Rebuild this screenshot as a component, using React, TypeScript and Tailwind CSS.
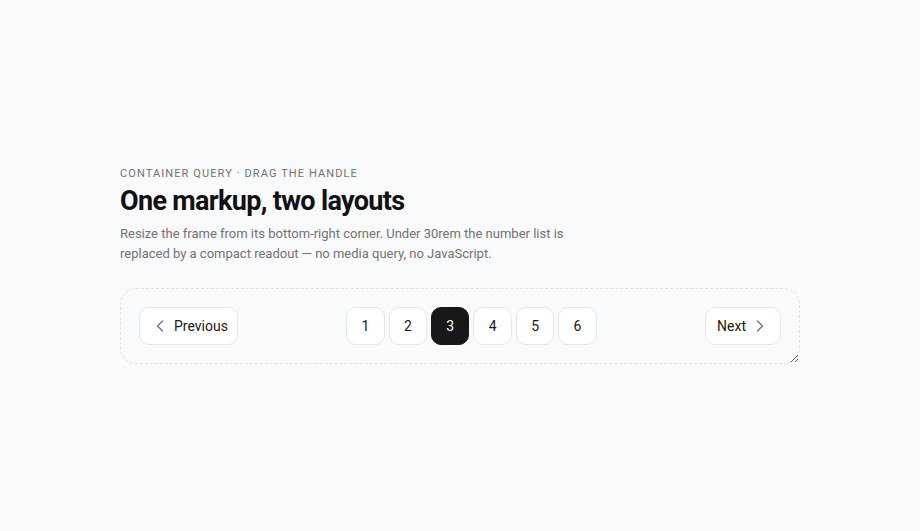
import { ChevronLeft, ChevronRight } from "lucide-react";

const PAGES = [1, 2, 3, 4, 5, 6];
const CURRENT = 3;

const Pager = () => {
  return (
    <nav
      aria-label="Pagination"
      className="@container resize overflow-hidden rounded-2xl border border-dashed border-[#dfe2e7] p-[18px]"
    >
      <div className="flex items-center justify-between">
        <button
          type="button"
          className="flex h-[38px] items-center gap-1 rounded-[10px] border border-[#e6e7ea] bg-white pl-2.5 pr-[9px] text-sm text-[#18181b]"
        >
          <ChevronLeft className="h-5 w-5 text-[#71717a]" strokeWidth={1.5} />
          Previous
        </button>

        <ol className="flex gap-1 @max-[30rem]:hidden">
          {PAGES.map((page) => (
            <li key={page}>
              <button
                type="button"
                aria-current={page === CURRENT ? "page" : undefined}
                className={
                  page === CURRENT
                    ? "flex h-[38px] w-[38.4px] items-center justify-center rounded-[10px] border border-[#18181b] bg-[#18181b] text-sm text-white"
                    : "flex h-[38px] w-[38.4px] items-center justify-center rounded-[10px] border border-[#e6e7ea] bg-white text-sm text-[#18181b]"
                }
              >
                {page}
              </button>
            </li>
          ))}
        </ol>

        <span className="hidden text-sm text-[#52525b] @max-[30rem]:inline">
          Page {CURRENT} of {PAGES.length}
        </span>

        <button
          type="button"
          className="flex h-[38px] items-center gap-1 rounded-[10px] border border-[#e6e7ea] bg-white pl-[11px] pr-2.5 text-sm text-[#18181b]"
        >
          Next
          <ChevronRight className="h-5 w-5 text-[#71717a]" strokeWidth={1.5} />
        </button>
      </div>
    </nav>
  );
};

const App = () => {
  return (
    <div className="flex min-h-screen items-center justify-center bg-[#f9fafb] pb-0.5 font-['Roboto',sans-serif]">
      <div className="w-[680px]">
        <p className="text-[11px] uppercase leading-4 tracking-[0.1em] text-[#71717a]">
          Container query · drag the handle
        </p>
        <h1 className="mt-0.5 text-[27px] font-bold leading-[34px] tracking-[-0.025em] text-[#111113]">
          One markup, two layouts
        </h1>
        <p className="mt-1.5 max-w-[470px] text-[13px] leading-5 text-[#71717a]">
          Resize the frame from its bottom-right corner. Under 30rem the number list is
          replaced by a compact readout — no media query, no JavaScript.
        </p>
        <div className="mt-6">
          <Pager />
        </div>
      </div>
    </div>
  );
};

export default App;
